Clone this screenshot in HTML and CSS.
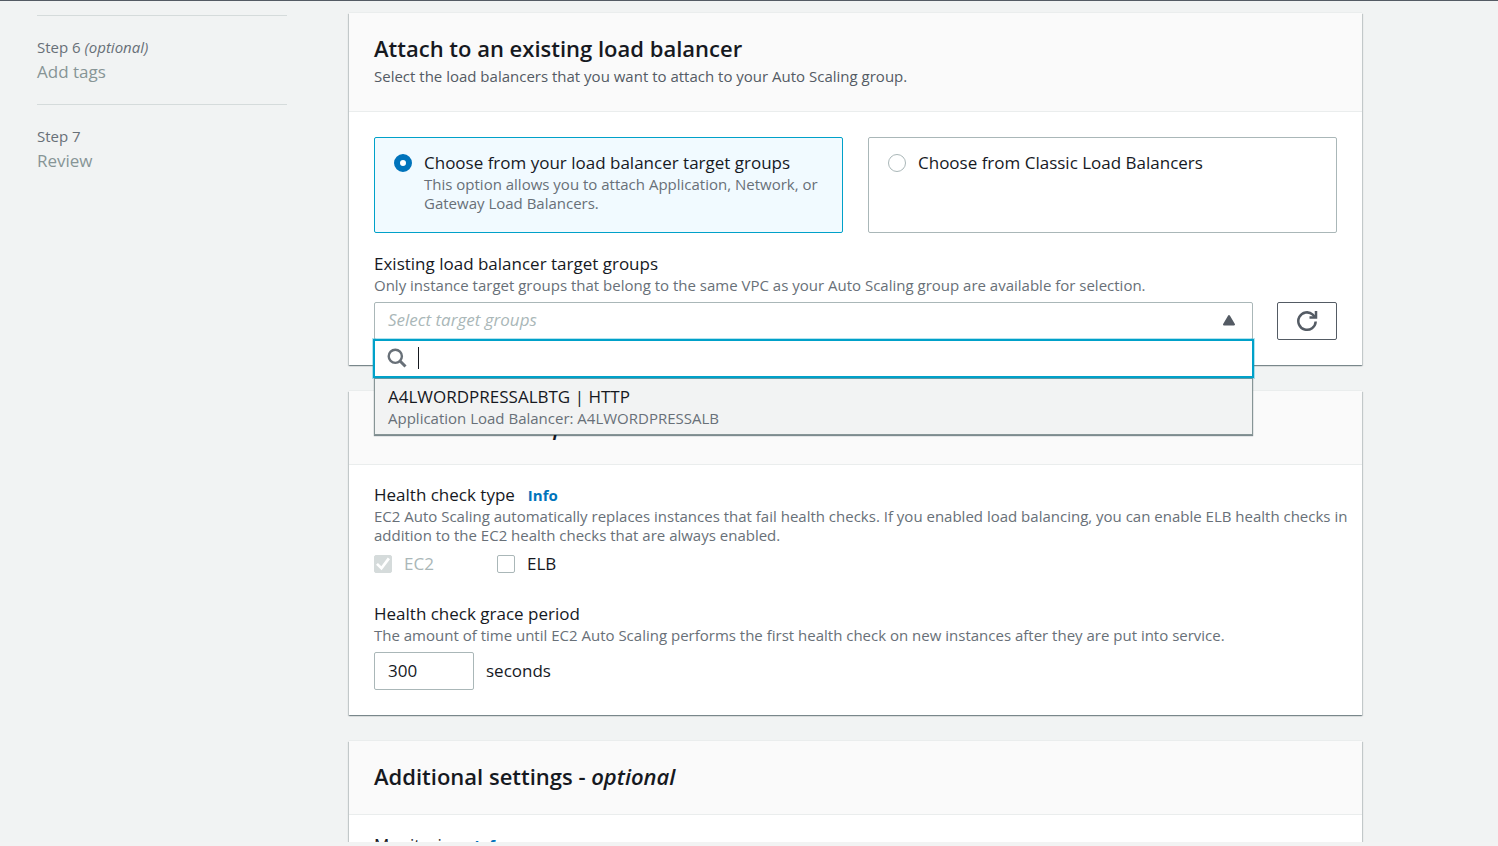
FILE: index.html
```html
<!DOCTYPE html>
<html lang="en">
<head>
<meta charset="utf-8">
<title>Create Auto Scaling group</title>
<link rel="stylesheet" href="styles.css">
</head>
<body>
<div class="viewport">
  <nav class="steps" aria-label="Steps">
    <ol class="step-list">
      <li class="step"><span class="step-number">Step 6 <em>(optional)</em></span><span class="step-title">Add tags</span></li>
      <li class="step"><span class="step-number">Step 7</span><span class="step-title">Review</span></li>
    </ol>
  </nav>
  <main class="content">
    <section class="card">
      <header class="card-header">
        <h2 class="card-title">Attach to an existing load balancer</h2>
        <p class="card-description">Select the load balancers that you want to attach to your Auto Scaling group.</p>
      </header>
      <div class="card-body card-body-tiles">
        <div class="tiles">
          <label class="tile tile-selected">
            <input class="radio" type="radio" name="lb" checked>
            <span class="tile-text"><span class="label">Choose from your load balancer target groups</span><span class="hint">This option allows you to attach Application, Network, or Gateway Load Balancers.</span></span>
          </label>
          <label class="tile">
            <input class="radio" type="radio" name="lb">
            <span class="tile-text"><span class="label">Choose from Classic Load Balancers</span></span>
          </label>
        </div>
        <div class="field">
          <span class="label" id="groups-label">Existing load balancer target groups</span>
          <span class="hint">Only instance target groups that belong to the same VPC as your Auto Scaling group are available for selection.</span>
          <div class="select-row">
            <div class="select">
              <button class="select-trigger" type="button" aria-labelledby="groups-label" aria-expanded="true">
                <span class="placeholder">Select target groups</span>
                <svg class="arrow" viewBox="0 0 14 12" aria-hidden="true"><path d="M7 2 12 10.500H2Z" fill="#545b64" stroke="#545b64" stroke-width="2" stroke-linejoin="round"/></svg>
              </button>
              <div class="dropdown">
                <div class="search">
                  <svg class="search-icon" viewBox="0 0 20 20" fill="none" stroke="#687078" aria-hidden="true"><circle cx="8.300" cy="8.300" r="6.600" stroke-width="2.400"/><path d="m13 13 5.500 5.500" stroke-width="3"/></svg>
                  <input class="search-input" type="text" aria-label="Filter target groups">
                  <span class="caret"></span>
                </div>
                <ul class="options" role="listbox">
                  <li class="option" role="option" aria-selected="false"><span class="label">A4LWORDPRESSALBTG | HTTP</span><span class="hint">Application Load Balancer: A4LWORDPRESSALB</span></li>
                </ul>
              </div>
            </div>
            <button class="refresh" type="button" aria-label="Refresh">
              <svg class="refresh-icon" viewBox="0 0 22 22" fill="none" stroke="#545b64" stroke-width="2.500" aria-hidden="true"><path d="M19.700 11.500A8.700 8.700 0 1 1 16.800 4.600L19 7"/><path d="M20 1V7.600H13.500"/></svg>
            </button>
          </div>
        </div>
      </div>
    </section>

    <section class="card">
      <header class="card-header">
        <h2 class="card-title">Health checks - <em>optional</em></h2>
      </header>
      <div class="card-body">
        <div class="field">
          <div class="label-row"><span class="label">Health check type</span><a class="info" href="#">Info</a></div>
          <span class="hint hint-wide">EC2 Auto Scaling automatically replaces instances that fail health checks. If you enabled load balancing, you can enable ELB health checks in addition to the EC2 health checks that are always enabled.</span>
          <div class="checks">
            <label class="check check-disabled"><input class="checkbox" type="checkbox" checked disabled>EC2</label>
            <label class="check"><input class="checkbox" type="checkbox">ELB</label>
          </div>
        </div>
        <div class="field field-spaced">
          <label class="label" for="grace">Health check grace period</label>
          <span class="hint">The amount of time until EC2 Auto Scaling performs the first health check on new instances after they are put into service.</span>
          <div class="grace-row"><input class="number" id="grace" type="text" inputmode="numeric" value="300"><span>seconds</span></div>
        </div>
      </div>
    </section>

    <section class="card">
      <header class="card-header">
        <h2 class="card-title">Additional settings - <em>optional</em></h2>
      </header>
      <div class="card-body">
        <div class="label-row"><span class="label">Monitoring</span><a class="info" href="#">Info</a></div>
      </div>
    </section>
  </main>
</div>
<div class="footer"></div>
</body>
</html>
```
FILE: styles.css
```css
* { box-sizing: border-box; }

body {
  display: flex;
  flex-direction: column;
  height: 100vh;
  margin: 0;
  overflow: hidden;
  border-top: 1px solid #545b64;
  background: #f1f3f3;
  color: #16191f;
  font: 17px/22px "Open Sans", "Noto Sans", sans-serif;
}

button, input { font: inherit; color: inherit; }
h2, p, ol, ul { margin: 0; padding: 0; }
li { list-style: none; }

.viewport {
  flex: 1;
  min-height: 0;
  overflow: hidden;
  display: grid;
  grid-template-columns: 250px minmax(0, 1fr);
  align-items: start;
  gap: 62px;
  padding: 12px 136px 0 37px;
}

.footer { flex: none; height: 4px; background: #f2f3f3; }

.steps { padding-top: 2px; }
.step {
  display: flex;
  flex-direction: column;
  gap: 2px;
  padding: 21px 0 19px;
  border-top: 1px solid #d5dbdb;
  color: #879596;
}
.step-number { font-size: 15px; line-height: 20px; color: #687078; }
.step-title { line-height: 26px; }

.content { display: grid; gap: 26px; }

.card {
  background: #fff;
  box-shadow: 0 1px 1px 0 rgba(0, 28, 36, 0.3), 1px 1px 1px 0 rgba(0, 28, 36, 0.15), -1px 1px 1px 0 rgba(0, 28, 36, 0.15), 0 -1px 0 0 #eaeded;
}
.card-header { padding: 21px 25px 24px; background: #fafafa; border-bottom: 1px solid #eaeded; }
.card-title { font-size: 22px; line-height: 28px; font-weight: 600; }
.card-description { padding: 5px 0 1px; font-size: 15px; line-height: 19px; color: #545b64; }
.card-body { padding: 19px 25px 25px; }
.card-body-tiles { padding-top: 25px; }

.label { display: block; }
.hint { display: block; margin-top: 1px; font-size: 15px; line-height: 19px; color: #687078; }
.hint-wide { margin-right: -16px; }

.tiles { display: grid; grid-template-columns: 1fr 1fr; gap: 25px; margin-bottom: 20px; }
.tile {
  display: flex;
  align-items: flex-start;
  gap: 12px;
  padding: 14px 19px 19px;
  border: 1px solid #aab7b8;
  border-radius: 2px;
}
.tile-selected { border-color: #00a1c9; background: #f1faff; }

.radio {
  flex: none;
  appearance: none;
  width: 18px;
  height: 18px;
  margin: 2px 0 0;
  border: 1px solid #aab7b8;
  border-radius: 50%;
  background: #fff;
}
.radio:checked { border: 6px solid #0073bb; }

.select-row { display: flex; gap: 24px; margin-top: 7px; }
.select { position: relative; flex: 1; }
.select-trigger {
  display: flex;
  align-items: center;
  justify-content: space-between;
  width: 100%;
  height: 38px;
  padding: 0 16px 2px 13px;
  border: 1px solid #aab7b8;
  border-radius: 2px;
  background: #fff;
}
.placeholder { font-style: italic; color: #aab7b8; }
.arrow { width: 14px; height: 12px; }

.dropdown { position: absolute; z-index: 1; top: 37px; left: -1px; right: -1px; }
.search {
  position: relative;
  display: flex;
  align-items: center;
  gap: 10px;
  height: 39px;
  padding: 0 0 1px 12px;
  border: 2px solid #00a1c9;
  background: #fff;
  box-shadow: 0 0 0 1px rgba(0, 161, 201, 0.3);
}
.search-icon { flex: none; width: 20px; height: 20px; }
.search-input { flex: 1; min-width: 0; height: 30px; padding: 0; border: 0; outline: 0; background: none; }
.caret { position: absolute; left: 43px; top: 6px; width: 1px; height: 22px; background: #16191f; }
.options {
  margin: 0 1px;
  background: #f2f3f3;
  border: 1px solid #879596;
  box-shadow: 0 1px 1px rgba(0, 28, 36, 0.5);
}
.option { padding: 7px 13px 6px; }

.refresh {
  display: flex;
  align-items: center;
  justify-content: center;
  width: 60px;
  height: 38px;
  padding: 0;
  border: 1px solid #545b64;
  border-radius: 2px;
  background: #fff;
}
.refresh-icon { width: 22px; height: 22px; }

.label-row { display: flex; align-items: baseline; gap: 13px; }
.info { font-size: 15px; line-height: 19px; font-weight: 700; color: #0073bb; text-decoration: none; }

.checks { display: grid; grid-template-columns: 98px 98px; gap: 25px; margin-top: 8px; }
.check { display: flex; align-items: center; gap: 12px; }
.check-disabled { color: #aab7b8; }
.checkbox {
  flex: none;
  appearance: none;
  width: 18px;
  height: 18px;
  margin: 0;
  border: 1px solid #aab7b8;
  border-radius: 2px;
  background: #fff;
}
.checkbox:disabled { display: grid; place-items: center; border-color: #d5dbdb; background: #d5dbdb; }
.checkbox:checked::before {
  content: "";
  width: 14px;
  height: 14px;
  background: #fff;
  clip-path: polygon(0 56%, 14% 42%, 38% 66%, 84% 4%, 100% 16%, 40% 94%);
}

.field-spaced { margin-top: 28px; }
.grace-row { display: flex; align-items: center; gap: 12px; margin-top: 7px; }
.number { width: 100px; height: 38px; padding: 0 13px 2px; border: 1px solid #aab7b8; border-radius: 2px; background: #fff; }
```
